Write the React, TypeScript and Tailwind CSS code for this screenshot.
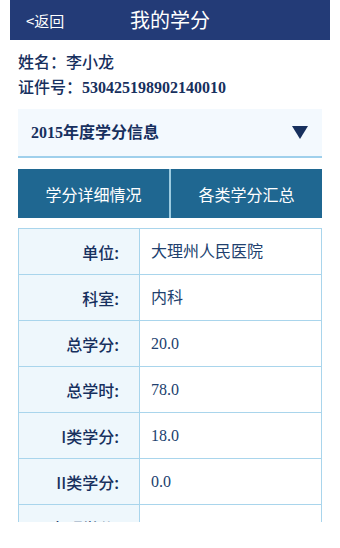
import { useState } from 'react';

const rows = [
    { label: '单位:', value: '大理州人民医院' },
    { label: '科室:', value: '内科' },
    { label: '总学分:', value: '20.0' },
    { label: '总学时:', value: '78.0' },
    { label: 'I类学分:', value: '18.0' },
    { label: 'II类学分:', value: '0.0' },
    { label: '专题学分:', value: '0.0' },
];

const sans = "font-['Noto_Sans_CJK_SC',sans-serif]";
const mixed = "font-['Liberation_Serif','Noto_Sans_CJK_SC',serif]";

export default function App() {
    const [tab, setTab] = useState(0);

    return (
        <div className={`w-[340px] h-[548px] bg-white ${sans}`}>
            <div className="mx-[10px] w-[320px] h-[522px] overflow-hidden flex flex-col">
                {/* Header */}
                <div className="h-[40px] shrink-0 bg-[#233b77] grid grid-cols-[1fr_auto_1fr] items-center text-white">
                    <button className="justify-self-start pl-[16px] text-[15px] leading-none">&lt;返回</button>
                    <h1 className="text-[20px] leading-none">我的学分</h1>
                    <div />
                </div>

                {/* User info */}
                <div className="px-[8px] pt-[9px] text-[16px] leading-[25px] text-[#17305e] font-medium">
                    <p>姓名：李小龙</p>
                    <p>
                        证件号：
                        <span className="font-['Liberation_Serif',serif] font-bold">530425198902140010</span>
                    </p>
                </div>

                <div className="mx-[8px] mt-[9px] flex flex-col">
                    {/* Year selector */}
                    <div className="h-[49px] bg-[#f3f9fe] border-b-2 border-[#9fd0ec] flex items-center justify-between pl-[13px] pr-[14px]">
                        <span className={`${mixed} font-bold text-[16px] text-[#17305e]`}>2015年度学分信息</span>
                        <svg width="16" height="13" viewBox="0 0 16 13">
                            <path d="M0 0 L16 0 L8 13 Z" fill="#17305e" />
                        </svg>
                    </div>

                    {/* Tabs */}
                    <div className="mt-[11px] h-[49px] flex bg-[#1f6791] text-white text-[16px]">
                        {['学分详细情况', '各类学分汇总'].map((t, i) => (
                            <button
                                key={t}
                                onClick={() => setTab(i)}
                                className={`flex-1 flex items-center justify-center ${i === 1 ? 'border-l-2 border-[#9ccbe0]' : ''} ${tab === i ? 'bg-[#1f6791]' : 'bg-[#1f6791]'}`}
                            >
                                {t}
                            </button>
                        ))}
                    </div>

                    {/* Details table */}
                    <table className="mt-[10px] w-full border-collapse border border-[#a9d5ec]">
                        <tbody>
                            {rows.map((r) => (
                                <tr key={r.label} className="h-[46px]">
                                    <td className="w-[121px] bg-[#eef7fc] border border-[#a9d5ec] text-right pr-[20px] text-[16px] font-medium text-[#17305e]">
                                        {r.label}
                                    </td>
                                    <td className={`border border-[#a9d5ec] pl-[11px] text-[16px] text-[#213f6e] ${mixed}`}>
                                        {r.value}
                                    </td>
                                </tr>
                            ))}
                        </tbody>
                    </table>
                </div>
            </div>
        </div>
    );
}
